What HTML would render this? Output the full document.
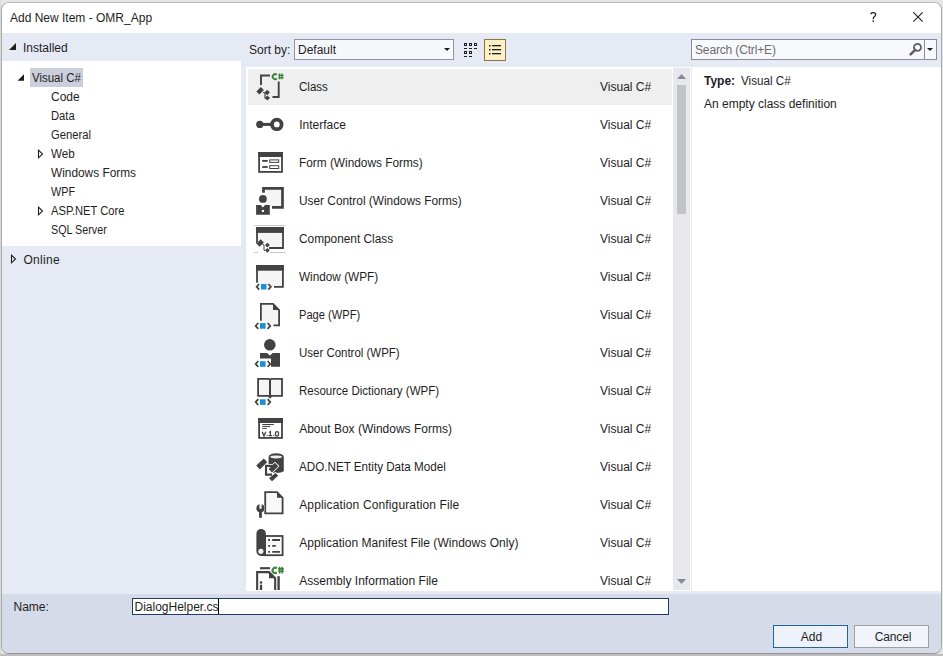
<!DOCTYPE html><html><head><meta charset="utf-8"><style>*{box-sizing:border-box;margin:0;padding:0}
html,body{width:943px;height:656px;overflow:hidden;background:#e6e6e6;font-family:"Liberation Sans",sans-serif;font-size:12px;color:#1e1e1e;position:relative}
.t{position:absolute;white-space:pre;line-height:14px}
.ic{position:absolute;overflow:visible}
#win{position:absolute;left:1px;top:2px;width:941px;height:652px;border:1px solid #a6a8ab;border-top-color:#bababa;border-bottom-color:#92969b;border-radius:8px;background:#e6eaf5;overflow:hidden}
#title{position:absolute;left:2px;top:3px;width:939px;height:30px;background:#fff;border-radius:7px 7px 0 0}
#band{position:absolute;left:2px;top:33px;width:939px;height:561px;background:#e6eaf5}
#tree{position:absolute;left:2px;top:61px;width:239px;height:185px;background:#fff}
#sel{position:absolute;left:30px;top:68px;width:53px;height:19px;background:#cbcedb}
#listbg{position:absolute;left:246px;top:67px;width:446px;height:524px;background:#fff;box-shadow:-1px 0 0 #e2e6ef}
#rowsel{position:absolute;left:248px;top:69px;width:424px;height:36px;background:#efefef}
#det{position:absolute;left:691px;top:67px;width:250px;height:524px;background:#fff;border-left:1px solid #e9e9ef}
#bottom{position:absolute;left:2px;top:594px;width:939px;height:59px;background:#d6dbe9;border-radius:0 0 7px 7px}
#combo{position:absolute;left:294px;top:39px;width:160px;height:21px;border:1px solid #8f93a2;background:#f6f7fb}
#combobtn{position:absolute;right:0;top:0;width:13px;height:19px;background:#f8f9fc}
#listbtn{position:absolute;left:484px;top:39px;width:22px;height:22px;border:1px solid #8c7544;background:#fdefc6}
#search{position:absolute;left:691px;top:39px;width:246px;height:21px;border:1px solid #8a8d99;background:#f8f9fc}
#searchsep{position:absolute;left:232px;top:0;width:1px;height:19px;background:#8a8d99}
#sbar{position:absolute;left:673px;top:68px;width:17px;height:522px;background:#e8e8ec}
#thumb{position:absolute;left:4px;top:17px;width:9px;height:129px;background:#c2c3c9}
#namebox{position:absolute;left:132px;top:598px;width:537px;height:17px;border:1px solid #1f3a6b;background:#fff}
#caret{position:absolute;left:218px;top:599px;width:1px;height:15px;background:#000}
#addbtn{position:absolute;left:773px;top:625px;width:75px;height:23px;border:1px solid #2d5f92;box-shadow:0 0 0 1px #c9e4f6;background:#eef2fb}
#cancelbtn{position:absolute;left:854px;top:625px;width:75px;height:23px;border:1px solid #a0a0a0;background:#f2f4fb}
#listclip{position:absolute;left:246px;top:69px;width:426px;height:521px;overflow:hidden}
#rowsel{left:2px;top:0px}
#outl{position:absolute;left:0;top:0;width:1px;height:656px;background:#d9dad3}
#outb{position:absolute;left:0;top:654px;width:943px;height:2px;background:#bdbdbd}
</style></head><body>
<div id="outl"></div><div id="outb"></div><div id="win"></div><div id="title"></div><div id="band"></div><div id="tree"></div><div id="listbg"></div><div id="det"></div><div id="bottom"></div>
<div class="t" style="left:10px;top:11px">Add New Item - OMR_App</div>
<svg class="ic" style="left:868px;top:10px" width="10" height="14" viewBox="0 0 10 14"><path d="M2.9 4.3Q3 2.6 5.3 2.6Q7.6 2.6 7.6 4.6Q7.6 5.9 6.3 6.8Q5.2 7.6 5.2 9.3" stroke="#1e1e1e" stroke-width="1.3" fill="none"/><circle cx="5.2" cy="11.1" r="0.85" fill="#1e1e1e"/></svg>
<svg class="ic" style="left:913px;top:12px" width="10" height="10" viewBox="0 0 10 10"><path d="M0.3 0.3L9.7 9.7M9.7 0.3L0.3 9.7" stroke="#1e1e1e" stroke-width="1.1"/></svg>
<svg class="ic" style="left:9px;top:43px" width="7" height="7" viewBox="0 0 7 7"><path d="M7 0V7H0Z" fill="#1e1e1e"/></svg>
<div class="t" style="left:23px;top:41px">Installed</div>
<div id="sel"></div>
<svg class="ic" style="left:17px;top:74px" width="7" height="7" viewBox="0 0 7 7"><path d="M7 0.3V6.8H0.5Z" fill="#1e1e1e"/></svg>
<div class="t" style="left:32.2px;top:71px;transform:scaleX(0.955);transform-origin:0 0">Visual C#</div>
<div class="t" style="left:51px;top:90px;transform:scaleX(1);transform-origin:0 0">Code</div>
<div class="t" style="left:51px;top:109px;transform:scaleX(0.934);transform-origin:0 0">Data</div>
<div class="t" style="left:51px;top:128px;transform:scaleX(0.937);transform-origin:0 0">General</div>
<svg class="ic" style="left:37px;top:149px" width="7" height="10" viewBox="0 0 7 10"><path d="M1.5 1.2L5.5 5L1.5 8.8Z" fill="none" stroke="#1e1e1e" stroke-width="1.1"/></svg>
<div class="t" style="left:51px;top:147px;transform:scaleX(0.97);transform-origin:0 0">Web</div>
<div class="t" style="left:51px;top:166px;transform:scaleX(0.988);transform-origin:0 0">Windows Forms</div>
<div class="t" style="left:51px;top:185px;transform:scaleX(0.903);transform-origin:0 0">WPF</div>
<svg class="ic" style="left:37px;top:206px" width="7" height="10" viewBox="0 0 7 10"><path d="M1.5 1.2L5.5 5L1.5 8.8Z" fill="none" stroke="#1e1e1e" stroke-width="1.1"/></svg>
<div class="t" style="left:51px;top:204px;transform:scaleX(0.931);transform-origin:0 0">ASP.NET Core</div>
<div class="t" style="left:51px;top:223px;transform:scaleX(0.895);transform-origin:0 0">SQL Server</div>
<svg class="ic" style="left:10px;top:254px" width="7" height="10" viewBox="0 0 7 10"><path d="M1.5 1.2L5.5 5L1.5 8.8Z" fill="none" stroke="#1e1e1e" stroke-width="1.1"/></svg>
<div class="t" style="left:23.5px;top:253px;letter-spacing:0.28px">Online</div>
<div class="t" style="left:249px;top:43px">Sort by:</div>
<div id="combo"><div id="combobtn"></div></div>
<div class="t" style="left:298px;top:43px">Default</div>
<svg class="ic" style="left:444px;top:48px" width="6" height="3" viewBox="0 0 6 3"><path d="M0 0H6L3 3Z" fill="#1e1e1e"/></svg>
<svg class="ic" style="left:463px;top:43px" width="15" height="15" viewBox="0 0 15 15"><rect x="1.5" y="0.5" width="2" height="2" fill="none" stroke="#1e1e1e" stroke-width="1"/><rect x="1" y="5" width="3" height="1" fill="#1e1e1e"/><rect x="6.5" y="0.5" width="2" height="2" fill="none" stroke="#1e1e1e" stroke-width="1"/><rect x="6" y="5" width="3" height="1" fill="#1e1e1e"/><rect x="11.5" y="0.5" width="2" height="2" fill="none" stroke="#1e1e1e" stroke-width="1"/><rect x="11" y="5" width="3" height="1" fill="#1e1e1e"/><rect x="1.5" y="8.5" width="2" height="2" fill="none" stroke="#1e1e1e" stroke-width="1"/><rect x="1" y="13" width="3" height="1" fill="#1e1e1e"/><rect x="6.5" y="8.5" width="2" height="2" fill="none" stroke="#1e1e1e" stroke-width="1"/><rect x="6" y="13" width="3" height="1" fill="#1e1e1e"/></svg>
<div id="listbtn"></div>
<svg class="ic" style="left:489px;top:44px" width="13" height="12" viewBox="0 0 13 12"><rect x="0" y="1" width="1.5" height="1.5" fill="#1e1e1e"/><rect x="0" y="5" width="1.5" height="1.5" fill="#1e1e1e"/><rect x="0" y="9" width="1.5" height="1.5" fill="#1e1e1e"/><rect x="3" y="1" width="9" height="1.3" fill="#1e1e1e"/><rect x="3" y="5" width="9" height="1.3" fill="#1e1e1e"/><rect x="3" y="9" width="9" height="1.3" fill="#1e1e1e"/></svg>
<div id="search"><div id="searchsep"></div></div>
<div class="t" style="left:695px;top:43px;color:#6d6d6d;letter-spacing:-0.15px">Search (Ctrl+E)</div>
<svg class="ic" style="left:908px;top:42px" width="14" height="14" viewBox="0 0 14 14"><circle cx="9.5" cy="5.4" r="3.5" fill="none" stroke="#5f5f5f" stroke-width="1.8"/><path d="M7.2 7.9L2.6 12.4" stroke="#5f5f5f" stroke-width="2.6" stroke-linecap="round"/></svg>
<svg class="ic" style="left:927px;top:48px" width="6" height="3" viewBox="0 0 6 3"><path d="M0 0H6L3 3Z" fill="#1e1e1e"/></svg>
<div id="listclip"><div id="rowsel"></div>
<div class="t" style="left:53.19999999999999px;top:11px;letter-spacing:0px;transform:scaleX(0.963);transform-origin:0 0">Class</div>
<div class="t" style="left:354px;top:11px">Visual C#</div>
<svg class="ic" style="left:8px;top:1px" width="32" height="32" viewBox="0 0 32 32"><path d="M7 15V5.5H16" stroke="#424242" stroke-width="1.9" fill="none"/><path d="M18.5 27H24.7V11.5" stroke="#424242" stroke-width="1.9" fill="none"/><path d="M22.8 4.9A2.45 2.45 0 1 0 22.8 8.5" stroke="#3a873a" stroke-width="1.9" fill="none"/><path d="M25.6 3.6V9.2M28 3.6V9.2M24.2 5.4H29.6M24.2 7.6H29.6" stroke="#3a873a" stroke-width="1.4"/><path d="M2.4 21.5L6.8 17L9.9 20L5.4 24.4Z" fill="#424242"/><path d="M10.5 22.5L13.2 19.8L15.9 22.5L13.2 25.2Z" fill="#424242"/><path d="M10.8 28L13.4 25.4L16 28L13.4 30.6Z" fill="#424242"/><path d="M9 22.5H11V28H12" stroke="#424242" stroke-width="1.2" fill="none"/>
</svg>
<div class="t" style="left:53.19999999999999px;top:49px;letter-spacing:0px;transform:scaleX(1);transform-origin:0 0">Interface</div>
<div class="t" style="left:354px;top:49px">Visual C#</div>
<svg class="ic" style="left:8px;top:39px" width="32" height="32" viewBox="0 0 32 32">
<circle cx="5.8" cy="16.4" r="3.6" fill="#424242"/><circle cx="22.8" cy="16.4" r="4.8" fill="none" stroke="#424242" stroke-width="3.8"/><path d="M8 16.4H18.5" stroke="#424242" stroke-width="3"/>
</svg>
<div class="t" style="left:53.19999999999999px;top:87px;letter-spacing:0px;transform:scaleX(0.987);transform-origin:0 0">Form (Windows Forms)</div>
<div class="t" style="left:354px;top:87px">Visual C#</div>
<svg class="ic" style="left:8px;top:77px" width="32" height="32" viewBox="0 0 32 32">
<rect x="5.1" y="6.9" width="22.9" height="19" fill="#fff" stroke="#424242" stroke-width="1.8"/><rect x="4.2" y="6" width="24.7" height="5" fill="#424242"/><rect x="8.2" y="14" width="5.5" height="1.8" fill="#424242"/><rect x="8.2" y="20.1" width="5.5" height="1.8" fill="#424242"/><rect x="15.7" y="13.9" width="9" height="2.5" fill="#fff" stroke="#424242" stroke-width="1"/><rect x="15.7" y="19.7" width="9" height="2.8" fill="#fff" stroke="#424242" stroke-width="1"/>
</svg>
<div class="t" style="left:53.19999999999999px;top:125px;letter-spacing:0px;transform:scaleX(0.988);transform-origin:0 0">User Control (Windows Forms)</div>
<div class="t" style="left:354px;top:125px">Visual C#</div>
<svg class="ic" style="left:8px;top:115px" width="32" height="32" viewBox="0 0 32 32">
<path d="M9.5 4.4H28.5V23.4H11.5V4.4" fill="#f5f5f5"/><path d="M9.5 8.8V4.4H28.5V23.4H18" fill="none" stroke="#424242" stroke-width="2.7"/><circle cx="8.9" cy="14.9" r="3.9" fill="#424242"/><path d="M2.1 21H6.8L8.9 23.6L11 21H15.8V30.8H2.1Z" fill="#424242"/><rect x="7.9" y="25.9" width="2.1" height="2.1" fill="#fff"/>
</svg>
<div class="t" style="left:53.19999999999999px;top:163px;letter-spacing:0px;transform:scaleX(0.987);transform-origin:0 0">Component Class</div>
<div class="t" style="left:354px;top:163px">Visual C#</div>
<svg class="ic" style="left:8px;top:153px" width="32" height="32" viewBox="0 0 32 32">
<path d="M0.5 3.5H31.5M0.5 30.5H4M16 30.5H31.5" stroke="#c6c6c6" stroke-width="1"/><path d="M3 22V6H29V26H15" fill="#f5f5f5" stroke="#424242" stroke-width="1.8"/><rect x="2.1" y="5" width="27.7" height="5.9" fill="#424242"/><path d="M2.4 21.6L6.7 17.3L9.9 20.5L5.6 24.8Z" fill="#424242" stroke="#fff" stroke-width="0.8" paint-order="stroke"/><path d="M11 23.1L13.4 20.7L15.8 23.1L13.4 25.5Z" fill="#424242"/><path d="M11 28.3L13.4 25.9L15.8 28.3L13.4 30.7Z" fill="#424242"/><path d="M8 21.5L10 23.1V28.3H11" stroke="#424242" stroke-width="1" fill="none"/>
</svg>
<div class="t" style="left:53.19999999999999px;top:201px;letter-spacing:0px;transform:scaleX(0.981);transform-origin:0 0">Window (WPF)</div>
<div class="t" style="left:354px;top:201px">Visual C#</div>
<svg class="ic" style="left:8px;top:191px" width="32" height="32" viewBox="0 0 32 32">
<path d="M3 22.8V6H28.9V26.8H20" fill="#f5f5f5" stroke="#424242" stroke-width="1.8"/><rect x="2.1" y="5" width="27.7" height="5.7" fill="#424242"/><rect x="7" y="24" width="5.5" height="5.5" fill="#1b8fd6"/><path d="M5.2 24L2.6 26.8L5.2 29.6M14.3 24L16.9 26.8L14.3 29.6" stroke="#424242" stroke-width="1.7" fill="none"/>
</svg>
<div class="t" style="left:53.19999999999999px;top:239px;letter-spacing:0px;transform:scaleX(0.927);transform-origin:0 0">Page (WPF)</div>
<div class="t" style="left:354px;top:239px">Visual C#</div>
<svg class="ic" style="left:8px;top:229px" width="32" height="32" viewBox="0 0 32 32">
<path d="M6.9 22.8V5.9H19L25.1 12V27.4H19.5" fill="#f5f5f5" stroke="#424242" stroke-width="1.8"/><path d="M19 5.9L25.1 12H19Z" fill="#424242"/><rect x="6" y="25.1" width="5.6" height="5.6" fill="#1b8fd6"/><path d="M4.3 25L1.6 27.9L4.3 30.8M13.6 25L16.3 27.9L13.6 30.8" stroke="#424242" stroke-width="1.7" fill="none"/>
</svg>
<div class="t" style="left:53.19999999999999px;top:277px;letter-spacing:0px;transform:scaleX(0.955);transform-origin:0 0">User Control (WPF)</div>
<div class="t" style="left:354px;top:277px">Visual C#</div>
<svg class="ic" style="left:8px;top:267px" width="32" height="32" viewBox="0 0 32 32">
<circle cx="15.8" cy="8.8" r="5.8" fill="#424242"/><path d="M6 17H13L15.9 19.6L18.8 17H26V30.8H17V22.5H6Z" fill="#424242"/><rect x="6" y="25.2" width="5.6" height="5.6" fill="#1b8fd6"/><path d="M4.3 25L1.6 27.9L4.3 30.8M13.6 25L16.3 27.9L13.6 30.8" stroke="#424242" stroke-width="1.7" fill="none"/>
</svg>
<div class="t" style="left:53.19999999999999px;top:315px;letter-spacing:0px;transform:scaleX(0.959);transform-origin:0 0">Resource Dictionary (WPF)</div>
<div class="t" style="left:354px;top:315px">Visual C#</div>
<svg class="ic" style="left:8px;top:305px" width="32" height="32" viewBox="0 0 32 32">
<path d="M4.1 4.9H14.8L16 6.1L17.2 4.9H28V21.9H17.5L16 23.4L14.5 21.9H4.1Z" fill="#f5f5f5" stroke="#424242" stroke-width="1.8"/><path d="M16 6V23" stroke="#424242" stroke-width="2"/><rect x="6" y="25.3" width="5.6" height="5.6" fill="#1b8fd6"/><path d="M4.3 25.2L1.6 28.1L4.3 31M13.6 25.2L16.3 28.1L13.6 31" stroke="#424242" stroke-width="1.7" fill="none"/>
</svg>
<div class="t" style="left:53.19999999999999px;top:353px;letter-spacing:0px;transform:scaleX(1);transform-origin:0 0">About Box (Windows Forms)</div>
<div class="t" style="left:354px;top:353px">Visual C#</div>
<svg class="ic" style="left:8px;top:343px" width="32" height="32" viewBox="0 0 32 32">
<rect x="5.1" y="6.9" width="22.9" height="19" fill="#fff" stroke="#424242" stroke-width="1.8"/><rect x="4.2" y="6" width="24.7" height="5" fill="#424242"/><path d="M8.2 12.5H19.8M8.2 14.4H16.4M8.2 16.4H12.8" stroke="#424242" stroke-width="1"/><path d="M8.2 19.8L10 24L11.8 19.8M15.2 20.6L16.4 19.6V24M14.6 23.6H18M21.5 20.2V23.2Q21.5 24 23 24Q24.5 24 24.5 23.2V20.6Q24.5 19.6 23 19.6Q21.5 19.6 21.5 20.6" stroke="#424242" stroke-width="1.3" fill="none"/><rect x="12.6" y="22.9" width="1.1" height="1.1" fill="#424242"/><rect x="19" y="22.9" width="1.1" height="1.1" fill="#424242"/>
</svg>
<div class="t" style="left:53.19999999999999px;top:391px;letter-spacing:0px;transform:scaleX(0.971);transform-origin:0 0">ADO.NET Entity Data Model</div>
<div class="t" style="left:354px;top:391px">Visual C#</div>
<svg class="ic" style="left:8px;top:381px" width="32" height="32" viewBox="0 0 32 32">
<path d="M14.6 6.8V20.6A7.6 2.4 0 0 0 29.8 20.6V6.8A7.6 3.6 0 0 0 14.6 6.8Z" fill="#424242"/><ellipse cx="22.1" cy="6.9" rx="5.9" ry="1.5" fill="#f0f0f0"/><path d="M2.2 15.6L9.8 8.5L13.2 12L5.9 19.5Z" fill="#fff" stroke="#fff" stroke-width="1.7" stroke-linejoin="round"/><path d="M20.9 12.8L24.3 16.2L18 22.5L14.6 19.1Z" fill="#fff" stroke="#fff" stroke-width="1.7" stroke-linejoin="round"/><path d="M21.5 22.9L24.2 25.6L18.1 31.2L15 28.3Z" fill="#fff" stroke="#fff" stroke-width="1.7" stroke-linejoin="round"/><path d="M12 14.9V25.6M11 15.9H19M11 24.6H18" stroke="#fff" stroke-width="3.8" fill="none"/><rect x="13" y="17.2" width="4.5" height="6" fill="#fff"/><path d="M2.2 15.6L9.8 8.5L13.2 12L5.9 19.5Z" fill="#424242"/><path d="M20.9 12.8L24.3 16.2L18 22.5L14.6 19.1Z" fill="#424242"/><path d="M21.5 22.9L24.2 25.6L18.1 31.2L15 28.3Z" fill="#424242"/><path d="M12 14.9V25.6M11 15.9H19M11 24.6H18" stroke="#424242" stroke-width="2.1" fill="none"/>
</svg>
<div class="t" style="left:53.19999999999999px;top:429px;letter-spacing:0.138px;transform:scaleX(1);transform-origin:0 0">Application Configuration File</div>
<div class="t" style="left:354px;top:429px">Visual C#</div>
<svg class="ic" style="left:8px;top:419px" width="32" height="32" viewBox="0 0 32 32">
<path d="M11.2 25.3V4.2H23L28.6 9.8V25.3Z" fill="#f8f8f8" stroke="#424242" stroke-width="1.8"/><path d="M23 4.2L28.6 9.8H23Z" fill="#424242"/><circle cx="6.5" cy="20.3" r="4.1" fill="#424242" stroke="#fff" stroke-width="0.9" paint-order="stroke"/><rect x="5.5" y="15.5" width="2.1" height="5.2" fill="#fff"/><rect x="5.1" y="22.5" width="2.8" height="7.3" fill="#424242"/>
</svg>
<div class="t" style="left:53.19999999999999px;top:467px;letter-spacing:0.03px;transform:scaleX(1);transform-origin:0 0">Application Manifest File (Windows Only)</div>
<div class="t" style="left:354px;top:467px">Visual C#</div>
<svg class="ic" style="left:8px;top:457px" width="32" height="32" viewBox="0 0 32 32">
<rect x="11" y="10" width="17.6" height="19.2" fill="#f8f8f8" stroke="#424242" stroke-width="1.8"/><path d="M2.4 7.7A4.75 4.75 0 0 1 11.9 7.7V29.9H7A4.6 4.6 0 0 1 2.4 25.3Z" fill="#424242"/><circle cx="6.9" cy="25.3" r="2.6" fill="#f0f0f0"/><path d="M14.2 14H16M14.2 19.8H16M14.2 25.9H16M18.2 14H26M18.2 19.8H21.8M18.2 25.9H26" stroke="#424242" stroke-width="1.8"/>
</svg>
<div class="t" style="left:53.19999999999999px;top:505px;letter-spacing:0.03px;transform:scaleX(1);transform-origin:0 0">Assembly Information File</div>
<div class="t" style="left:354px;top:505px">Visual C#</div>
<svg class="ic" style="left:8px;top:495px" width="32" height="32" viewBox="0 0 32 32">
<path d="M6 4.2H16.1" stroke="#424242" stroke-width="2.1"/><path d="M3.15 32V8.15H15L21.15 14.3V32" fill="#fff" stroke="#424242" stroke-width="2.1"/><path d="M15 8.15L21.15 14.3H15Z" fill="#424242"/><circle cx="7" cy="18.5" r="1.3" fill="#424242"/><path d="M7 20.7V32" stroke="#424242" stroke-width="2.3"/><path d="M24.6 12.2V32" stroke="#424242" stroke-width="2.4" fill="none"/><g paint-order="stroke" stroke="#fff" stroke-width="1"><path d="M22.8 4.4A2.6 2.6 0 1 0 22.8 8.4" stroke="#3a873a" stroke-width="2.1" fill="none"/></g><path d="M25.6 2.8V9.4M28.1 2.8V9.4M24.1 4.9H29.8M24.1 7.3H29.8" stroke="#3a873a" stroke-width="1.6"/>
</svg>
</div>
<div id="sbar"><div id="thumb"></div></div>
<svg class="ic" style="left:677px;top:74px" width="9" height="5" viewBox="0 0 9 5"><path d="M0 5H9L4.5 0Z" fill="#868999"/></svg>
<svg class="ic" style="left:677px;top:579px" width="9" height="5" viewBox="0 0 9 5"><path d="M0 0H9L4.5 5Z" fill="#868999"/></svg>
<div class="t" style="left:704px;top:74px;font-weight:bold">Type:</div>
<div class="t" style="left:740.8px;top:74px;transform:scaleX(0.97);transform-origin:0 0">Visual C#</div>
<div class="t" style="left:704px;top:96.5px">An empty class definition</div>
<div class="t" style="left:13.5px;top:599.5px">Name:</div>
<div id="namebox"></div>
<div class="t" style="left:134.5px;top:599.5px">DialogHelper.cs</div>
<div id="caret"></div>
<div id="addbtn"></div><div class="t" style="left:774px;width:75px;text-align:center;top:630px">Add</div>
<div id="cancelbtn"></div><div class="t" style="left:855.5px;width:75px;text-align:center;top:630px;letter-spacing:-0.15px">Cancel</div>
</body></html>
